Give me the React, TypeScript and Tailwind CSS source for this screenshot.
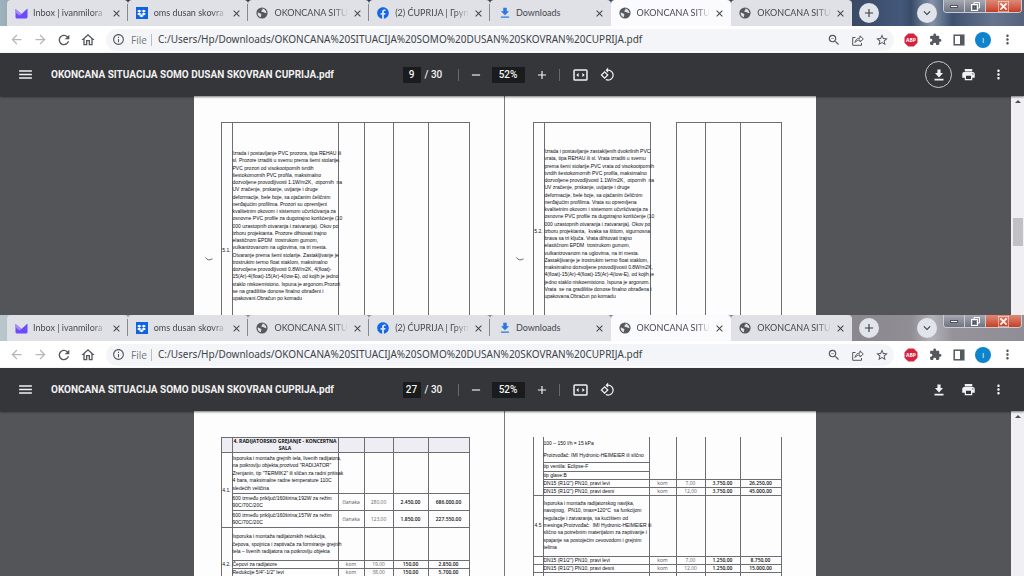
import React from 'react';
import {
  MdArrowBack, MdArrowForward, MdRefresh, MdOutlineHome, MdInfoOutline,
  MdZoomOut, MdStarBorder, MdMoreVert, MdMenu, MdPrint,
  MdAdd, MdRemove, MdClose, MdFileDownload, MdRotate90DegreesCcw,
  MdKeyboardArrowDown,
} from 'react-icons/md';
import { FaDropbox, FaFacebook } from 'react-icons/fa';

type Tab = { title: string; icon: React.ReactNode; active?: boolean };

const MailIcon = () => (
  <svg viewBox="0 0 13 11" className="w-[13px] h-[11px]">
    <path d="M0.5 1 L6.5 6 L12.5 0.5 V9 Q12.5 10.5 11 10.5 H2 Q0.5 10.5 0.5 9 Z" fill="#6d4aff" />
    <path d="M0.5 1 L6.5 6 L4.5 7.6 L0.5 4.5 Z" fill="#a78bfa" />
  </svg>
);

const GlobeIcon = () => (
  <svg viewBox="0 0 12 12" className="w-3 h-3">
    <circle cx="6" cy="6" r="5.6" fill="#55585d" />
    <path d="M6.2 1.6 C7.2 2.6 5.6 3.4 5.2 4.2 C5.8 5.4 7.6 4.8 8.6 5.8 L10.4 6.2 C10.4 4 9 2 6.2 1.6 Z" fill="#dfe1e7" />
    <path d="M1.7 5.4 C3 5.6 4.8 6.4 5.4 7.4 C5.4 8.4 4.6 9 5 10.3 C3 10 1.3 8 1.7 5.4 Z" fill="#dfe1e7" />
  </svg>
);

const PuzzleIcon = () => (
  <svg viewBox="0 0 24 24" className="w-[13px] h-[13px]" fill="currentColor">
    <path d="M20.5 11H19V7c0-1.1-.9-2-2-2h-4V3.5a2.5 2.5 0 0 0-5 0V5H4c-1.1 0-2 .9-2 2v3.8h1.5a2.7 2.7 0 0 1 0 5.4H2V20c0 1.1.9 2 2 2h3.8v-1.5a2.7 2.7 0 0 1 5.4 0V22H17c1.1 0 2-.9 2-2v-4h1.5a2.5 2.5 0 0 0 0-5z" />
  </svg>
);

const tabs: Tab[] = [
  { title: 'Inbox | ivanmilora', icon: <MailIcon /> },
  {
    title: 'oms dusan skovra',
    icon: (
      <span className="flex items-center justify-center w-3 h-3 bg-[#0f62e6]">
        <FaDropbox className="w-[9px] h-[9px] text-white" />
      </span>
    ),
  },
  { title: 'OKONCANA SITU', icon: <GlobeIcon /> },
  { title: '(2) ĆUPRIJA | Груп', icon: <FaFacebook className="w-3 h-3 text-[#1468e8]" /> },
  { title: 'Downloads', icon: <MdFileDownload className="w-[14px] h-[14px] text-[#2b78e4]" /> },
  { title: 'OKONCANA SITU', icon: <GlobeIcon />, active: true },
  { title: 'OKONCANA SITU', icon: <GlobeIcon /> },
];

const TabStrip = ({ frame }: { frame: string }) => (
  <div className={`relative flex h-[26px] shrink-0 pl-[7px] ${frame}`}>
    <div className="flex w-[845px] min-w-0">
      {tabs.map((tab, i) => (
        <div
          key={i}
          className={`relative flex flex-1 min-w-0 items-center rounded-t-[4px] pl-[8px] pr-[6px] ${
            tab.active ? 'bg-[#fbfbfd]' : 'bg-[#dfe1e7]'
          }`}
        >
          <span className="flex w-[18px] shrink-0 items-center">{tab.icon}</span>
          <a
            href="#"
            className={`flex-1 min-w-0 whitespace-nowrap font-['Lato',sans-serif] text-[9px] leading-4 text-[#45484e] ${
              tab.title === 'Downloads' ? '' : '[mask-image:linear-gradient(to_right,black_80%,transparent)]'
            }`}
          >
            {tab.title}
          </a>
          <button aria-label="Close tab" className="ml-[4px] shrink-0 text-[#3c4043]">
            <MdClose className="w-[11px] h-[11px]" stroke="currentColor" />
          </button>
          {i < 4 && <span className="absolute right-0 top-1 h-[17px] w-px bg-[#85888f]" />}
        </div>
      ))}
    </div>
    <button aria-label="New tab" className="ml-[7px] mt-[3px] flex h-5 w-5 items-center justify-center rounded-full bg-[#e1e4ea] text-[#3c4043]">
      <MdAdd className="w-[14px] h-[14px]" stroke="currentColor" />
    </button>
    <button aria-label="Search tabs" className="ml-auto mr-[87px] mt-[3px] flex h-5 w-5 items-center justify-center rounded-full bg-[#e1e4ea] text-[#3c4043]">
      <MdKeyboardArrowDown className="w-[14px] h-[14px]" stroke="currentColor" />
    </button>
    <div className="absolute right-[2px] top-0 flex h-[13px] overflow-hidden rounded-b-[4px] border border-t-0 border-[#c9ccd6] text-white">
      <button aria-label="Minimize" className="flex w-[21px] items-center justify-center border-r border-[#c9ccd6] bg-linear-to-b from-[#a7a9b3] to-[#70747f]">
        <span className="h-[3px] w-2 border border-[#50545e] bg-white" />
      </button>
      <button aria-label="Restore" className="flex w-[21px] items-center justify-center border-r border-[#c9ccd6] bg-linear-to-b from-[#a7a9b3] to-[#70747f]">
        <svg viewBox="0 0 9 9" className="w-[9px] h-[9px]" fill="none" stroke="#fff">
          <path d="M3 2.5 V0.5 H8.5 V6 H6.5" />
          <rect x="0.5" y="2.5" width="6" height="6" />
          <rect x="2.5" y="4.5" width="2" height="2" stroke="#50545e" />
        </svg>
      </button>
      <button aria-label="Close" className="flex w-[35px] items-center justify-center bg-linear-to-b from-[#dc8a78] to-[#c63c22]">
        <MdClose className="w-[11px] h-[11px]" stroke="#fff" strokeWidth={2} />
      </button>
    </div>
  </div>
);

const IconButton = ({ label, children, className = '' }: { label: string; children: React.ReactNode; className?: string }) => (
  <button aria-label={label} className={`flex h-6 w-6 shrink-0 items-center justify-center ${className}`}>
    {children}
  </button>
);

const AddressBar = () => (
  <div className="flex h-[27px] shrink-0 items-center bg-white pl-1 pr-[5px] text-[#55585d]">
    <IconButton label="Back" className="text-[#b4b6ba]"><MdArrowBack className="w-[15px] h-[15px]" /></IconButton>
    <IconButton label="Forward" className="text-[#b4b6ba]"><MdArrowForward className="w-[15px] h-[15px]" /></IconButton>
    <IconButton label="Reload"><MdRefresh className="w-4 h-4" stroke="currentColor" /></IconButton>
    <IconButton label="Home"><MdOutlineHome className="w-4 h-4" /></IconButton>
    <div className="ml-[6px] mr-[5px] flex h-[22px] min-w-0 flex-1 items-center rounded-full bg-[#f3f5f8]">
      <MdInfoOutline className="ml-[6px] w-[13px] h-[13px] shrink-0" />
      <span className="ml-[6px] w-[21px] shrink-0 border-r border-[#b9bcc2] text-[10px] leading-3 text-[#75787d]">File</span>
      <input
        aria-label="Address"
        className="ml-[6px] min-w-0 flex-1 bg-transparent font-['Noto_Sans',sans-serif] text-[10px] text-[#404347] outline-none"
        defaultValue="C:/Users/Hp/Downloads/OKONCANA%20SITUACIJA%20SOMO%20DUSAN%20SKOVRAN%20CUPRIJA.pdf"
      />
      <IconButton label="Zoom"><MdZoomOut className="w-[14px] h-[14px]" /></IconButton>
      <IconButton label="Share">
        <svg viewBox="0 0 12 12" className="w-3 h-3" fill="none" stroke="currentColor">
          <path d="M3.5 3.5 H0.7 V11.3 H9.5 V9" />
          <path d="M3 8.5 C3.4 5.6 5.2 4.2 8 4 V1.8 L11.3 5 L8 8 V6 C6 6 4.3 6.8 3 8.5 Z" strokeLinejoin="round" />
        </svg>
      </IconButton>
      <IconButton label="Bookmark"><MdStarBorder className="w-[14px] h-[14px]" /></IconButton>
    </div>
    <IconButton label="Adblock Plus">
      <svg viewBox="0 0 14 14" className="w-[14px] h-[14px]">
        <path d="M4.3 0.5 H9.7 L13.5 4.3 V9.7 L9.7 13.5 H4.3 L0.5 9.7 V4.3 Z" fill="#d6223f" />
        <text x="7" y="9" fontSize="5" fontWeight="700" fill="#fff" textAnchor="middle">ABP</text>
      </svg>
    </IconButton>
    <IconButton label="Extensions"><PuzzleIcon /></IconButton>
    <IconButton label="Side panel">
      <svg viewBox="0 0 12 12" className="w-3 h-3">
        <rect x="1.2" y="1.2" width="9.6" height="9.6" fill="none" stroke="currentColor" strokeWidth="1.5" />
        <rect x="7" y="1" width="4" height="10" fill="currentColor" />
      </svg>
    </IconButton>
    <IconButton label="Profile">
      <span className="flex h-4 w-4 items-center justify-center rounded-full bg-[#0d84cc] text-[8px] text-white">I</span>
    </IconButton>
    <IconButton label="Menu"><MdMoreVert className="w-[15px] h-[15px]" /></IconButton>
  </div>
);

const DownloadIcon = () => (
  <svg viewBox="0 0 12 12" className="w-3 h-3" fill="currentColor">
    <path d="M4.4 0.5 H7.6 V4 H10 L6 8.4 L2 4 H4.4 Z M1.5 9.8 H10.5 V11.4 H1.5 Z" />
  </svg>
);

const PdfToolbar = ({ page, ringed }: { page: string; ringed?: boolean }) => (
  <div className="relative z-10 flex h-[43px] shrink-0 items-center bg-[#35363a] font-['Roboto',sans-serif] text-[10px] font-medium text-[#f1f1f1] shadow-[0_1px_2px_#0008]">
    <div className="flex min-w-0 flex-1 items-center">
      <IconButton label="Toggle sidebar" className="ml-[13px]"><MdMenu className="w-[17px] h-[17px]" /></IconButton>
      <h1 className="ml-[14px] whitespace-nowrap text-[10px] font-bold">OKONCANA SITUACIJA SOMO DUSAN SKOVRAN CUPRIJA.pdf</h1>
    </div>
    <div className="flex items-center pl-[12px]">
      <input aria-label="Page number" defaultValue={page} className="h-4 w-[18px] bg-[#191b1c] text-center outline-none" />
      <span className="ml-[4px] w-[30px] whitespace-nowrap">/ 30</span>
      <span className="mx-[3px] h-3 w-px bg-[#66686c]" />
      <IconButton label="Zoom out" className="ml-[2px]"><MdRemove className="w-[14px] h-[14px]" /></IconButton>
      <input aria-label="Zoom level" defaultValue="52%" className="ml-1 h-4 w-[33px] bg-[#191b1c] text-center outline-none" />
      <IconButton label="Zoom in" className="ml-[5px]"><MdAdd className="w-[14px] h-[14px]" /></IconButton>
      <span className="ml-[5px] mr-[3px] h-3 w-px bg-[#66686c]" />
      <IconButton label="Fit to page" className="ml-[6px]">
        <svg viewBox="0 0 16 13" className="w-[15px] h-3">
          <rect x="1" y="1" width="14" height="11" rx="1" fill="none" stroke="currentColor" strokeWidth="1.6" />
          <path d="M6 4.3 V8.7 L3.4 6.5 Z M10 4.3 V8.7 L12.6 6.5 Z" fill="currentColor" />
        </svg>
      </IconButton>
      <IconButton label="Rotate" className="ml-[3px]"><MdRotate90DegreesCcw className="w-[15px] h-[15px]" /></IconButton>
    </div>
    <div className="flex flex-1 items-center justify-end gap-1 pr-[14px]">
      <button
        aria-label="Download"
        className={`flex h-[27px] w-[27px] items-center justify-center rounded-full border ${ringed ? 'border-[#c9cacc]' : 'border-transparent'}`}
      >
        <DownloadIcon />
      </button>
      <IconButton label="Print"><MdPrint className="w-[15px] h-[15px]" /></IconButton>
      <IconButton label="More" className="ml-[2px]"><MdMoreVert className="w-[15px] h-[15px]" /></IconButton>
    </div>
  </div>
);

const Lines = ({ text, className = '' }: { text: string[]; className?: string }) => (
  <div className={`flex flex-col justify-between ${className}`}>
    {text.map((line, i) => (
      <p key={i} className="whitespace-pre leading-[7px]">{line}</p>
    ))}
  </div>
);

const windowsText = [
  'Izrada i postavljanje PVC prozora, tipa REHAU ili',
  'sl. Prozore izraditi u svemu prema šemi stolarije.',
  'PVC prozori od visokootpornih tvrdih',
  'šestokomornih PVC profila, maksimalno',
  'dozvoljene provodljivosti 1.1W/m2K,  otpornih  na',
  'UV zračenje, prskanje, uvijanje i druge',
  'deformacije, bele boje, sa ojačanim čeličnim',
  'nerđajućim profilima. Prozori su opremljeni',
  'kvalitetnim okovom i sistemom učvršćivanja za',
  'osnovne PVC profile za dugotrajno korišćenje (10',
  '000 uzastopnih otvaranja i zatvaranja). Okov po',
  'izboru projektanta. Prozore dihtovati trajno',
  'elastičnom EPDM  trostrukom gumom,',
  'vulkanizovanom na uglovima, na tri mesta.',
  'Otvaranje prema šemi stolarije. Zastakljivanje je',
  'trostrukim termo float staklom, maksimalno',
  'dozvoljene provodljivosti 0.8W/m2K, 4(float)-',
  '15(Ar)-4(float)-15(Ar)-4(low-E), od kojih je jedno',
  'staklo niskoemisiono. Ispuna je argonom.Prozori',
  'se na gradilište donose finalno obrađeni i',
  'upakovani.Obračun po komadu',
];

const doorsText = [
  'Izrada i postavljanje zastakljenih dvokrilnih PVC',
  'vrata, tipa REHAU ili sl. Vrata izraditi u svemu',
  'prema šemi stolarije.PVC vrata od visokootpornih',
  'tvrdih šestokomornih PVC profila, maksimalno',
  'dozvoljene provodljivosti 1.1W/m2K,  otpornih  na',
  'UV zračenje, prskanje, uvijanje i druge',
  'deformacije, bele boje, sa ojačanim čeličnim',
  'nerđajućim profilima. Vrata su opremljena',
  'kvalitetnim okovom i sistemom učvršćivanja za',
  'osnovne PVC profile za dugotrajno korišćenje (10',
  '000 uzastopnih otvaranja i zatvaranja). Okov po',
  'izboru projektanta,  kvaka sa štitom, sigurnosna',
  'brava sa tri ključa. Vrata dihtovati trajno',
  'elastičnom EPDM  trostrukom gumom,',
  'vulkanizovanom na uglovima, na tri mesta.',
  'Zastakljivanje je trostrukim termo float staklom,',
  'maksimalno dozvoljene provodljivosti 0.8W/m2K,',
  '4(float)-15(Ar)-4(float)-15(Ar)-4(low-E), od kojih je',
  'jedno staklo niskoemisiono. Ispuna je argonom.',
  'Vrata  se na gradilište donose finalno obrađena i',
  'upakovana.Obračun po komadu',
];

const tableClass =
  "table-fixed border-collapse font-['Liberation_Sans',sans-serif] text-[5px] leading-[7px] text-[#0c0c10] [&_td]:border [&_td]:border-[#6d6d72] [&_td]:p-0 [&_th]:border [&_th]:border-[#6d6d72] [&_th]:p-0";

const Cols = ({ widths }: { widths: number[] }) => (
  <colgroup>
    {widths.map((w, i) => <col key={i} style={{ width: w }} />)}
  </colgroup>
);

const PenMark = () => (
  <svg viewBox="0 0 8 4" className="absolute left-[11px] top-[161px] w-2 h-1" fill="none" stroke="#66666b">
    <path d="M0.5 0.5 Q3 4.5 7.5 1.8" />
  </svg>
);

const Sheet = ({ children, last }: { children: React.ReactNode; last?: boolean }) => (
  <div className={`relative w-[311px] shrink-0 bg-[#fdfdfe] ${last ? '' : 'border-r border-[#77777c]'}`}>{children}</div>
);

const num = "text-center font-['Open_Sans',sans-serif] text-[5px]";

const PriceCells = ({ row }: { row: string[] }) => (
  <>
    <td className={`${num} text-[#55555a]`}>{row[0]}</td>
    <td className={`${num} text-[#66666b]`}>{row[1]}</td>
    <td className={`${num} font-semibold`}>{row[2]}</td>
    <td className={`${num} font-semibold`}>{row[3]}</td>
  </>
);

const EmptyCells = () => <><td /><td /><td /><td /></>;

const Page9 = () => (
  <Sheet>
    <table className={`ml-[27px] mt-[26px] w-[249px] ${tableClass}`}>
      <Cols widths={[11, 106, 26, 29, 35, 41]} />
      <tbody>
        <tr className="h-[240px] align-top">
          <td className="text-center"><p className="pt-[124px]">5.1.</p></td>
          <td className="pl-px"><Lines text={windowsText} className="mt-[27px] h-[152px]" /></td>
          <EmptyCells />
        </tr>
      </tbody>
    </table>
    <PenMark />
  </Sheet>
);

const Page10 = () => (
  <Sheet last>
    <div className="ml-[28px] mt-[26px] flex items-start gap-[25px]">
      <table className={`w-[118px] ${tableClass}`}>
        <Cols widths={[11, 106]} />
        <tbody>
          <tr className="h-[240px] align-top">
            <td className="text-center"><p className="pt-[105px]">5.2.</p></td>
            <td className="pl-px"><Lines text={doorsText} className="mt-[25px] h-[152px]" /></td>
          </tr>
        </tbody>
      </table>
      <table className={`w-[106px] ${tableClass}`}>
        <Cols widths={[29, 35, 41]} />
        <tbody>
          <tr className="h-[240px]"><td /><td /><td /></tr>
        </tbody>
      </table>
    </div>
    <PenMark />
  </Sheet>
);

const Page27 = () => (
  <Sheet>
    <table className={`ml-[27px] mt-[26px] w-[249px] ${tableClass}`}>
      <Cols widths={[11, 106, 26, 29, 35, 41]} />
      <tbody>
        <tr className="h-[15px] bg-[#efedf4]">
          <td />
          <th className="whitespace-nowrap font-['Open_Sans',sans-serif] text-[5px] font-bold">
            4. RADIJATORSKO GREJANJE - KONCERTNA<br />SALA
          </th>
          <EmptyCells />
        </tr>
        <tr className="h-[41px]">
          <td rowSpan={3} className="text-center align-top"><p className="pt-[34px]">4.1.</p></td>
          <td className="pl-px">
            <Lines
              className="h-[37px]"
              text={[
                'Isporuka i montaža grejnih tela, livenih radijatora,',
                'na poikrovlju objekta,prozivod "RADIJATOR"',
                'Zrenjanin, tip "TERMIK2" ili sličan za radni pritisak',
                '4 bara, maksimalne radne temperature 110C',
                'sledećih veličina',
              ]}
            />
          </td>
          <EmptyCells />
        </tr>
        <tr className="h-[17px]">
          <td className="whitespace-nowrap pl-px">600 između priključ/160širina;192W za režim<br />90C/70C/20C</td>
          <PriceCells row={['članaka', '280,00', '2.450,00', '686.000,00']} />
        </tr>
        <tr className="h-[17px]">
          <td className="whitespace-nowrap pl-px">600 između priključ/160širina;157W za režim<br />90C/70C/20C</td>
          <PriceCells row={['članaka', '123,00', '1.850,00', '227.550,00']} />
        </tr>
        <tr className="h-[33px]">
          <td rowSpan={4} className="text-center align-top"><p className="pt-[33px]">4.2.</p></td>
          <td className="pl-px">
            <Lines
              className="h-[22px]"
              text={[
                'Isporuka i montaža radijatorskih redukcija,',
                'čepova, spojnica i zaptivača za formiranje grejnih',
                'tela – livenih radijatora na potkrovlju objekta',
              ]}
            />
          </td>
          <EmptyCells />
        </tr>
        <tr className="h-2">
          <td className="pl-px">Čepovi za radijatore</td>
          <PriceCells row={['kom', '19,00', '150,00', '2.850,00']} />
        </tr>
        <tr className="h-2">
          <td className="pl-px">Redukcije 5/4"-1/2" levi</td>
          <PriceCells row={['kom', '38,00', '150,00', '5.700,00']} />
        </tr>
        <tr className="h-2"><td /><EmptyCells /></tr>
      </tbody>
    </table>
  </Sheet>
);

const Page28 = () => (
  <Sheet last>
    <table className={`ml-[28px] mt-[26px] w-[249px] [&_tr:first-child>td]:border-t-0 ${tableClass}`}>
      <Cols widths={[10, 106, 27, 29, 35, 41]} />
      <tbody>
        <tr className="h-[25px]">
          <td rowSpan={5} />
          <td className="whitespace-nowrap pl-px">
            <p>100 – 150 l/h = 15 kPa</p>
            <p className="mt-[5px]">Proizvođač: IMI Hydronic-HEIMEIER ili slično</p>
          </td>
          <td rowSpan={3} /><td rowSpan={3} /><td rowSpan={3} /><td rowSpan={3} />
        </tr>
        <tr className="h-[9px]"><td className="pl-px">tip ventila: Eclipse-F</td></tr>
        <tr className="h-2"><td className="pl-px">tip glave:B</td></tr>
        <tr className="h-2">
          <td className="pl-px">DN15 (R1/2") PN10, pravi levi</td>
          <PriceCells row={['kom', '7,00', '3.750,00', '26.250,00']} />
        </tr>
        <tr className="h-2">
          <td className="pl-px">DN15 (R1/2") PN10, pravi desni</td>
          <PriceCells row={['kom', '12,00', '3.750,00', '45.000,00']} />
        </tr>
        <tr className="h-[61px]">
          <td className="text-center">4.5</td>
          <td className="pl-px">
            <Lines
              className="h-[51px]"
              text={[
                'Isporuka i montaža radijatorskog navijka,',
                'navojnog,  PN10, tmax=120°C  sa funkcijom',
                'regulacije i zatvaranja, sa kućištem od',
                'mesinga;Proizvođač:  IMI Hydronic-HEIMEIER ili',
                'slično sa potrebnim materijalom za zaptivanje i',
                'spajanje sa postojećim cevovodom i grejnim',
                'telima',
              ]}
            />
          </td>
          <EmptyCells />
        </tr>
        <tr className="h-2">
          <td />
          <td className="pl-px">DN15 (R1/2") PN10, pravi levi</td>
          <PriceCells row={['kom', '7,00', '1.250,00', '8.750,00']} />
        </tr>
        <tr className="h-2">
          <td />
          <td className="pl-px">DN15 (R1/2") PN10, pravi desni</td>
          <PriceCells row={['kom', '12,00', '1.250,00', '15.000,00']} />
        </tr>
        <tr className="h-2"><td /><td /><EmptyCells /></tr>
      </tbody>
    </table>
  </Sheet>
);

const Viewer = ({ children, thumb }: { children: React.ReactNode; thumb?: boolean }) => (
  <div className="flex min-h-0 flex-1 bg-[#535559]">
    <div className="flex min-w-0 flex-1 justify-center overflow-hidden pr-[2px]">{children}</div>
    <div className="flex w-[13px] flex-col items-center bg-[#f0f0f2] pt-1">
      <svg viewBox="0 0 6 3" className="w-[6px] h-[3px]"><path d="M0 3 L3 0 L6 3 Z" fill="#505050" /></svg>
      {thumb && <div className="mt-[115px] h-7 w-[10px] bg-[#c1c1c3]" />}
    </div>
  </div>
);

const App = () => (
  <main className="flex h-screen flex-col overflow-hidden font-['Open_Sans','Noto_Sans',sans-serif]">
    <section className="flex h-[315px] shrink-0 flex-col overflow-hidden">
      <TabStrip frame="bg-[linear-gradient(to_right,#9fb3bd,#2c3346_12%,#3a4862_83%,#43587a_88%,#3a4c68_89%,#8494a8_91%,#3f5270_93%,#66758f_97%,#56627c)]" />
      <AddressBar />
      <PdfToolbar page="9" ringed />
      <Viewer thumb>
        <Page9 />
        <Page10 />
      </Viewer>
    </section>
    <section className="flex min-h-0 flex-1 flex-col overflow-hidden">
      <TabStrip frame="bg-[linear-gradient(to_right,#b9c6cc,#8b8890_25%,#8b8890_84%,#918d95_89%,#b3b2b8_91%,#96929a_93%,#8f8d95)]" />
      <AddressBar />
      <PdfToolbar page="27" />
      <Viewer>
        <Page27 />
        <Page28 />
      </Viewer>
    </section>
  </main>
);

export default App;
